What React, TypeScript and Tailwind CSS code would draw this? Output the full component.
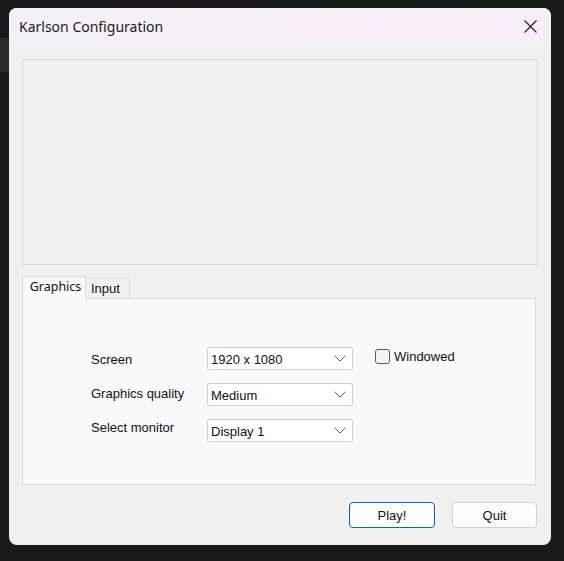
import React from "react";

const seg = { fontFamily: '"Noto Sans", "Open Sans", sans-serif' };
const tah = { fontFamily: '"Liberation Sans", Arial, sans-serif' };

function Chevron() {
  return (
    <svg width="12" height="7" viewBox="0 0 12 7" className="text-[#555]">
      <path d="M0.5 0.8 L6 6 L11.5 0.8" fill="none" stroke="currentColor" strokeWidth="1" />
    </svg>
  );
}

function Select({ value }: { value: string }) {
  return (
    <div className="w-[146px] h-[23px] bg-white border border-[#cfcfcf] rounded-[2px] flex items-center justify-between pl-[3px] pr-[6px]">
      <span className="text-[13px] text-[#111] leading-none mt-[1px]" style={tah}>{value}</span>
      <Chevron />
    </div>
  );
}

export default function App() {
  return (
    <div className="relative w-[564px] h-[561px] bg-[#191919] pl-[9px] pt-[8px] overflow-hidden">
      <div className="absolute left-0 top-[38px] w-[9px] h-[34px] bg-[#2a2a2a]" />
      <div className="relative w-[542px] h-[537px] rounded-[8px] overflow-hidden bg-[#f0f0f0] flex flex-col">
        <div className="h-[36px] shrink-0 flex items-center justify-between pl-[10px] pr-[14px] bg-gradient-to-r from-[#f3f1f6] to-[#f9eef7]">
          <span className="text-[14px] text-[#1a1a1a]" style={seg}>Karlson Configuration</span>
          <svg width="13" height="13" viewBox="0 0 13 13">
            <path d="M0.5 0.5 L12.5 12.5 M12.5 0.5 L0.5 12.5" stroke="#222" strokeWidth="1.2" />
          </svg>
        </div>
        <div className="flex flex-col pl-[13px] pt-[15px]">
          <div className="w-[516px] h-[206px] border border-[#dadada] bg-[#f0f0f0]" />
          <div className="mt-[11px] flex items-end h-[22px]">
            <div className="w-[64px] bg-[#f9f9f9] border border-b-0 border-[#dcdcdc] flex items-center justify-center relative z-10 -mb-px h-[23px]">
              <span className="text-[12.5px] text-[#111] -mt-[2px] ml-[3px]" style={seg}>Graphics</span>
            </div>
            <div className="w-[44px] h-[20px] bg-[#f0f0f0] border border-l-0 border-b-0 border-[#dcdcdc] flex items-center pl-[5px]">
              <span className="text-[13px] text-[#111] mt-[1px]" style={tah}>Input</span>
            </div>
          </div>
          <div className="w-[514px] h-[187px] bg-[#f9f9f9] border border-[#dcdcdc] pl-[68px] pt-[48px] flex flex-col gap-[13px]">
            <div className="flex items-center h-[23px]">
              <span className="w-[116px] text-[13px] text-[#111] mt-[2px]" style={tah}>Screen</span>
              <Select value="1920 x 1080" />
              <div className="ml-[22px] -mt-[4px] flex items-center gap-[4px]">
                <div className="w-[15px] h-[15px] border border-[#5c5c5c] rounded-[3px] bg-[#f4f4f4]" />
                <span className="text-[13px] text-[#111]" style={tah}>Windowed</span>
              </div>
            </div>
            <div className="flex items-center h-[23px]">
              <span className="w-[116px] text-[13px] text-[#111] -mt-[2px]" style={tah}>Graphics quality</span>
              <Select value="Medium" />
            </div>
            <div className="flex items-center h-[23px]">
              <span className="w-[116px] text-[13px] text-[#111] -mt-[5px]" style={tah}>Select monitor</span>
              <Select value="Display 1" />
            </div>
          </div>
          <div className="mt-[17px] flex pl-[327px] gap-[17px]">
            <div className="w-[86px] h-[26px] rounded-[4px] border border-[#0067c0] bg-[#fdfdfd] flex items-center justify-center">
              <span className="text-[13px] text-[#111] mt-[1px]" style={tah}>Play!</span>
            </div>
            <div className="w-[85px] h-[26px] rounded-[4px] border border-[#d0d0d0] bg-[#fdfdfd] flex items-center justify-center">
              <span className="text-[13px] text-[#111] mt-[1px]" style={tah}>Quit</span>
            </div>
          </div>
        </div>
      </div>
    </div>
  );
}
